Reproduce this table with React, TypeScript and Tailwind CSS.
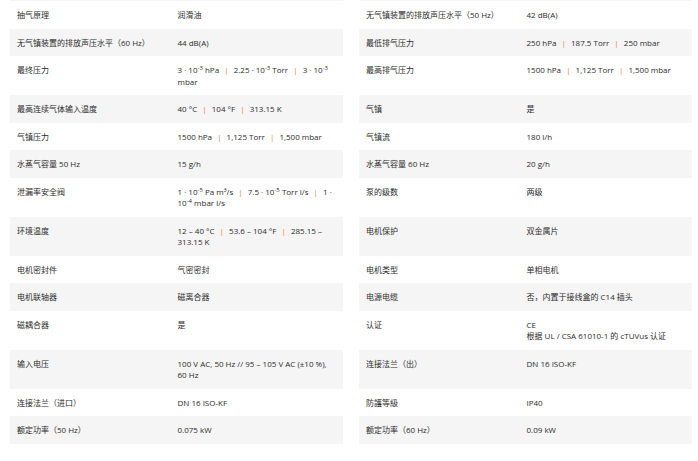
import React from 'react'

type Spec = { label: string; value: React.ReactNode }

const Sep = () => <span className="text-[#ee7f2d] mx-[3px]">|</span>

const Exp = ({ n }: { n: string }) => <sup className="text-[6px] leading-none">{n}</sup>

const left: Spec[] = [
    { label: '抽气原理', value: '润滑油' },
    { label: '无气镇装置的排放声压水平（60 Hz）', value: '44 dB(A)' },
    {
        label: '最终压力',
        value: <>3 · 10<Exp n="-3" /> hPa <Sep /> 2.25 · 10<Exp n="-3" /> Torr <Sep /> 3 · 10<Exp n="-3" /> mbar</>,
    },
    { label: '最高连续气体输入温度', value: <>40 °C <Sep /> 104 °F <Sep /> 313.15 K</> },
    { label: '气镇压力', value: <>1500 hPa <Sep /> 1,125 Torr <Sep /> 1,500 mbar</> },
    { label: '水蒸气容量 50 Hz', value: '15 g/h' },
    {
        label: '泄漏率安全阀',
        value: <>1 · 10<Exp n="-5" /> Pa m³/s <Sep /> 7.5 · 10<Exp n="-5" /> Torr l/s <Sep /> 1&nbsp;· 10<Exp n="-4" /> mbar l/s</>,
    },
    { label: '环境温度', value: <>12 – 40 °C <Sep /> 53.6 – 104 °F <Sep /> 285.15 – 313.15 K</> },
    { label: '电机密封件', value: '气密密封' },
    { label: '电机联轴器', value: '磁离合器' },
    { label: '磁耦合器', value: '是' },
    { label: '输入电压', value: '100 V AC, 50 Hz // 95 – 105 V AC (±10 %), 60 Hz' },
    { label: '连接法兰（进口）', value: 'DN 16 ISO-KF' },
    { label: '额定功率（50 Hz）', value: '0.075 kW' },
]

const right: Spec[] = [
    { label: '无气镇装置的排放声压水平（50 Hz）', value: '42 dB(A)' },
    { label: '最低排气压力', value: <>250 hPa <Sep /> 187.5 Torr <Sep /> 250 mbar</> },
    { label: '最高排气压力', value: <>1500 hPa <Sep /> 1,125 Torr <Sep /> 1,500 mbar</> },
    { label: '气镇', value: '是' },
    { label: '气镇流', value: '180 l/h' },
    { label: '水蒸气容量 60 Hz', value: '20 g/h' },
    { label: '泵的级数', value: '两级' },
    { label: '电机保护', value: '双金属片' },
    { label: '电机类型', value: '单相电机' },
    { label: '电源电缆', value: '否，内置于接线盒的 C14 插头' },
    { label: '认证', value: <>CE<br />根据 UL / CSA 61010-1 的 cTUVus 认证</> },
    { label: '连接法兰（出）', value: 'DN 16 ISO-KF' },
    { label: '防護等級', value: 'IP40' },
    { label: '额定功率（60 Hz）', value: '0.09 kW' },
]

const Row = ({ spec, shaded }: { spec: Spec; shaded: boolean }) => (
    <div className={`grid grid-cols-2 py-[8px] ${shaded ? 'bg-[#f5f5f5]' : 'bg-white'}`}>
        <div className="pl-[7px] pr-2">{spec.label}</div>
        <div className="pl-[1px] pr-[10px]">{spec.value}</div>
    </div>
)

const App = () => {
    return (
        <div
            className="w-[698px] h-[461px] overflow-hidden bg-white text-[#2b2b2b] text-[8px] leading-[11.5px]"
            style={{ fontFamily: '"Open Sans", "Noto Sans CJK SC", sans-serif' }}
        >
            <div className="grid grid-cols-[333px_333px] gap-x-4 pl-[10px]">
                <div className="h-px bg-[#f5f5f5]" />
                <div className="h-px bg-[#f5f5f5]" />
                {left.map((spec, i) => (
                    <React.Fragment key={spec.label}>
                        <Row spec={spec} shaded={i % 2 === 1} />
                        <Row spec={right[i]} shaded={i % 2 === 1} />
                    </React.Fragment>
                ))}
            </div>
        </div>
    )
}

export default App
